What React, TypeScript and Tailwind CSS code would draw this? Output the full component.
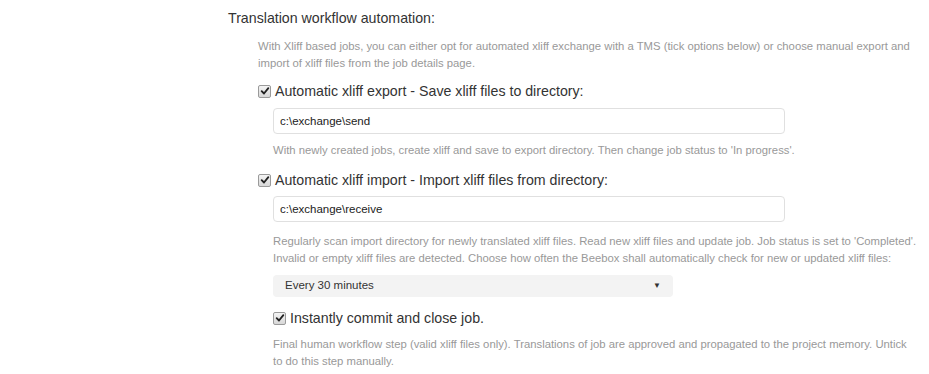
import { useState } from 'react';

function Check({ checked, onChange }: { checked: boolean; onChange: () => void }) {
  return (
    <button
      type="button"
      onClick={onChange}
      className="flex h-[13px] w-[13px] shrink-0 items-center justify-center rounded-[2px] border border-[#9a9a9a] bg-gradient-to-b from-[#f4f4f4] to-[#d8d8d8]"
    >
      {checked && (
        <svg viewBox="0 0 12 12" className="h-[10px] w-[10px]">
          <path d="M2 6.2 L4.8 9 L10 2.6" fill="none" stroke="#222" strokeWidth="2.2" strokeLinecap="round" strokeLinejoin="round" />
        </svg>
      )}
    </button>
  );
}

export default function App() {
  const [exp, setExp] = useState(true);
  const [imp, setImp] = useState(true);
  const [commit, setCommit] = useState(true);

  return (
    <div className="min-h-[374px] w-[929px] overflow-hidden bg-white font-['Liberation_Sans',Arial,sans-serif] text-[#333]">
      <div className="pl-[228px] pt-[8px]">
        <h3 className="text-[14.2px] leading-[20px]">Translation workflow automation:</h3>

        <div className="pl-[30px]">
          <p className="mt-[10px] pr-[15px] text-[11.3px] leading-[17px] text-[#999]">
            With Xliff based jobs, you can either opt for automated xliff exchange with a TMS (tick options below) or choose manual export and import of xliff files from the job details page.
          </p>

          <div className="mt-[9px] flex items-center gap-[4px] text-[14.2px] leading-[20px]">
            <Check checked={exp} onChange={() => setExp(!exp)} />
            <span>Automatic xliff export - Save xliff files to directory:</span>
          </div>
          <div className="pl-[15px]">
            <input
              defaultValue="c:\exchange\send"
              className="mt-[7px] block h-[26px] w-[512px] rounded-[4px] border border-[#e0e0e0] px-[6px] text-[11.5px] text-[#222] outline-none"
            />
            <p className="mt-[8px] text-[11.3px] leading-[17px] text-[#999]">
              With newly created jobs, create xliff and save to export directory. Then change job status to 'In progress'.
            </p>
          </div>

          <div className="mt-[11px] flex items-center gap-[4px] text-[14.2px] leading-[20px]">
            <Check checked={imp} onChange={() => setImp(!imp)} />
            <span>Automatic xliff import - Import xliff files from directory:</span>
          </div>
          <div className="pl-[15px]">
            <input
              defaultValue="c:\exchange\receive"
              className="mt-[6px] block h-[26px] w-[512px] rounded-[4px] border border-[#e0e0e0] px-[6px] text-[11.5px] text-[#222] outline-none"
            />
            <p className="mt-[11px] text-[11.3px] leading-[17px] text-[#999]">
              Regularly scan import directory for newly translated xliff files. Read new xliff files and update job. Job status is set to 'Completed'. Invalid or empty xliff files are detected. Choose how often the Beebox shall automatically check for new or updated xliff files:
            </p>
            <div className="mt-[8px] flex h-[22px] w-[400px] items-center justify-between rounded-[4px] bg-[#f3f3f3] pl-[12px] pr-[12px] text-[11.5px] text-[#333]">
              <span>Every 30 minutes</span>
              <span className="text-[8px]">▼</span>
            </div>

            <div className="mt-[11px] flex items-center gap-[4px] text-[14.2px] leading-[20px]">
              <Check checked={commit} onChange={() => setCommit(!commit)} />
              <span>Instantly commit and close job.</span>
            </div>
            <p className="mt-[8px] pr-[10px] text-[11.3px] leading-[17px] text-[#999]">
              Final human workflow step (valid xliff files only). Translations of job are approved and propagated to the project memory. Untick to do this step manually.
            </p>
          </div>
        </div>
      </div>
    </div>
  );
}
